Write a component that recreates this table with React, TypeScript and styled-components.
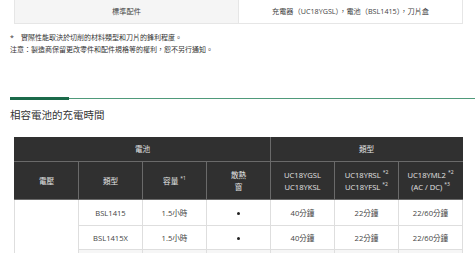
import React from 'react';
import styled, { createGlobalStyle } from 'styled-components';

const GlobalStyle = createGlobalStyle`
  html, body {
    margin: 0;
    padding: 0;
    background: #fff;
  }
  body {
    font-family: "Open Sans", "Noto Sans CJK TC", sans-serif;
    color: #333;
    overflow: hidden;
  }
`;

type Row = { model: string; time: string; a: string; b: string; c: string };

const rows: Row[] = [
  { model: 'BSL1415', time: '1.5小時', a: '40分鐘', b: '22分鐘', c: '22/60分鐘' },
  { model: 'BSL1415X', time: '1.5小時', a: '40分鐘', b: '22分鐘', c: '22/60分鐘' },
];

const App: React.FC = () => {
  return (
    <React.Fragment>
      <GlobalStyle />
      <Page>
        <SpecTable>
          <tbody>
            <tr>
              <SpecLabel>標準配件</SpecLabel>
              <SpecValue>充電器（UC18YGSL），電池（BSL1415），刀片盒</SpecValue>
            </tr>
          </tbody>
        </SpecTable>

        <Notes>
          <Note>
            <Star>*</Star>實際性能取決於切削的材料類型和刀片的鋒利程度。
          </Note>
          <Note>注意：製造商保留更改零件和配件規格等的權利，恕不另行通知。</Note>
        </Notes>

        <SectionRule />
        <SectionTitle>相容電池的充電時間</SectionTitle>

        <ChargeTable>
          <colgroup>
            {Array.from({ length: 7 }).map((_, i) => (
              <col key={i} style={{ width: `${100 / 7}%` }} />
            ))}
          </colgroup>
          <thead>
            <tr>
              <HeadCell colSpan={4} $h={25}>電池</HeadCell>
              <HeadCell colSpan={3} $h={25}>類型</HeadCell>
            </tr>
            <tr>
              <HeadCell $h={38}>電壓</HeadCell>
              <HeadCell $h={38}>類型</HeadCell>
              <HeadCell $h={38}>
                容量<Sup>*1</Sup>
              </HeadCell>
              <HeadCell $h={38}>
                散熱
                <br />窗
              </HeadCell>
              <HeadCell $h={38}>
                UC18YGSL
                <br />
                UC18YKSL
              </HeadCell>
              <HeadCell $h={38}>
                UC18YRSL<Sup>*2</Sup>
                <br />
                UC18YFSL<Sup>*2</Sup>
              </HeadCell>
              <HeadCell $h={38}>
                UC18YML2<Sup>*2</Sup>
                <br />
                (AC / DC)<Sup>*3</Sup>
              </HeadCell>
            </tr>
          </thead>
          <tbody>
            {rows.map((r, i) => (
              <tr key={r.model}>
                {i === 0 && <BodyCell rowSpan={3} $h={26} />}
                <BodyCell $h={i === 0 ? 26 : 24}>{r.model}</BodyCell>
                <BodyCell>{r.time}</BodyCell>
                <BodyCell>
                  <Dot />
                </BodyCell>
                <BodyCell>{r.a}</BodyCell>
                <BodyCell>{r.b}</BodyCell>
                <BodyCell>{r.c}</BodyCell>
              </tr>
            ))}
            <tr>
              <BodyCell $h={24} $shade />
              <BodyCell $shade />
              <BodyCell $shade />
              <BodyCell $shade />
              <BodyCell $shade />
              <BodyCell $shade />
            </tr>
          </tbody>
        </ChargeTable>
      </Page>
    </React.Fragment>
  );
};

export default App;

const Page = styled.div`
  width: 475px;
  padding: 0 0 0 10px;
  box-sizing: border-box;
`;

const SpecTable = styled.table`
  width: 449px;
  margin-left: 4px;
  border-collapse: collapse;
  table-layout: fixed;
`;

const SpecLabel = styled.td`
  width: 50%;
  height: 21px;
  padding: 0 0 2px;
  background: #f5f5f5;
  border: 1px solid #e6e6e6;
  border-top: none;
  text-align: center;
  font-size: 7.2px;
  color: #444;
`;

const SpecValue = styled(SpecLabel)`
  background: #fff;
`;

const Notes = styled.div`
  margin-top: 9px;
  display: flex;
  flex-direction: column;
  gap: 3px;
`;

const Note = styled.div`
  font-size: 7px;
  line-height: 9px;
  color: #333;
  white-space: nowrap;
`;

const Star = styled.span`
  display: inline-block;
  width: 11px;
`;

const SectionRule = styled.div`
  margin-top: 44px;
  height: 1px;
  background: #4f9a7a;
  position: relative;

  &::before {
    content: '';
    position: absolute;
    left: 0;
    top: -1px;
    width: 59px;
    height: 3px;
    background: #1b6a4a;
  }
`;

const SectionTitle = styled.h2`
  margin: 9px 0 0;
  font-family: "Noto Sans CJK TC", sans-serif;
  font-size: 10.5px;
  line-height: 14px;
  font-weight: 400;
  color: #333;
`;

const ChargeTable = styled.table`
  width: 449px;
  margin: 15px 0 0 4px;
  border-collapse: collapse;
  table-layout: fixed;
`;

const HeadCell = styled.th<{ $h?: number }>`
  height: ${p => (p.$h ? `${p.$h - 1}px` : 'auto')};
  padding: 0;
  background: #303030;
  color: #e4e4e4;
  border: 1px solid #6a6a6a;
  border-top: none;
  font-size: 7.6px;
  line-height: 12px;
  font-weight: 400;
  text-align: center;
  vertical-align: middle;

  &:first-child {
    border-left-color: #303030;
  }
  &:last-child {
    border-right-color: #303030;
  }
`;

const Sup = styled.sup`
  font-size: 5px;
  line-height: 0;
  margin-left: 2px;
  vertical-align: 4px;
`;

const BodyCell = styled.td<{ $h?: number; $shade?: boolean }>`
  height: ${p => (p.$h ? `${p.$h - 1}px` : 'auto')};
  padding: 0;
  background: ${p => (p.$shade ? '#f6f6f6' : '#fff')};
  border: 1px solid #dedede;
  color: #444;
  font-size: 7.6px;
  text-align: center;
  vertical-align: middle;
`;

const Dot = styled.span`
  display: inline-block;
  width: 3px;
  height: 3px;
  border-radius: 50%;
  background: #222;
  vertical-align: middle;
`;
